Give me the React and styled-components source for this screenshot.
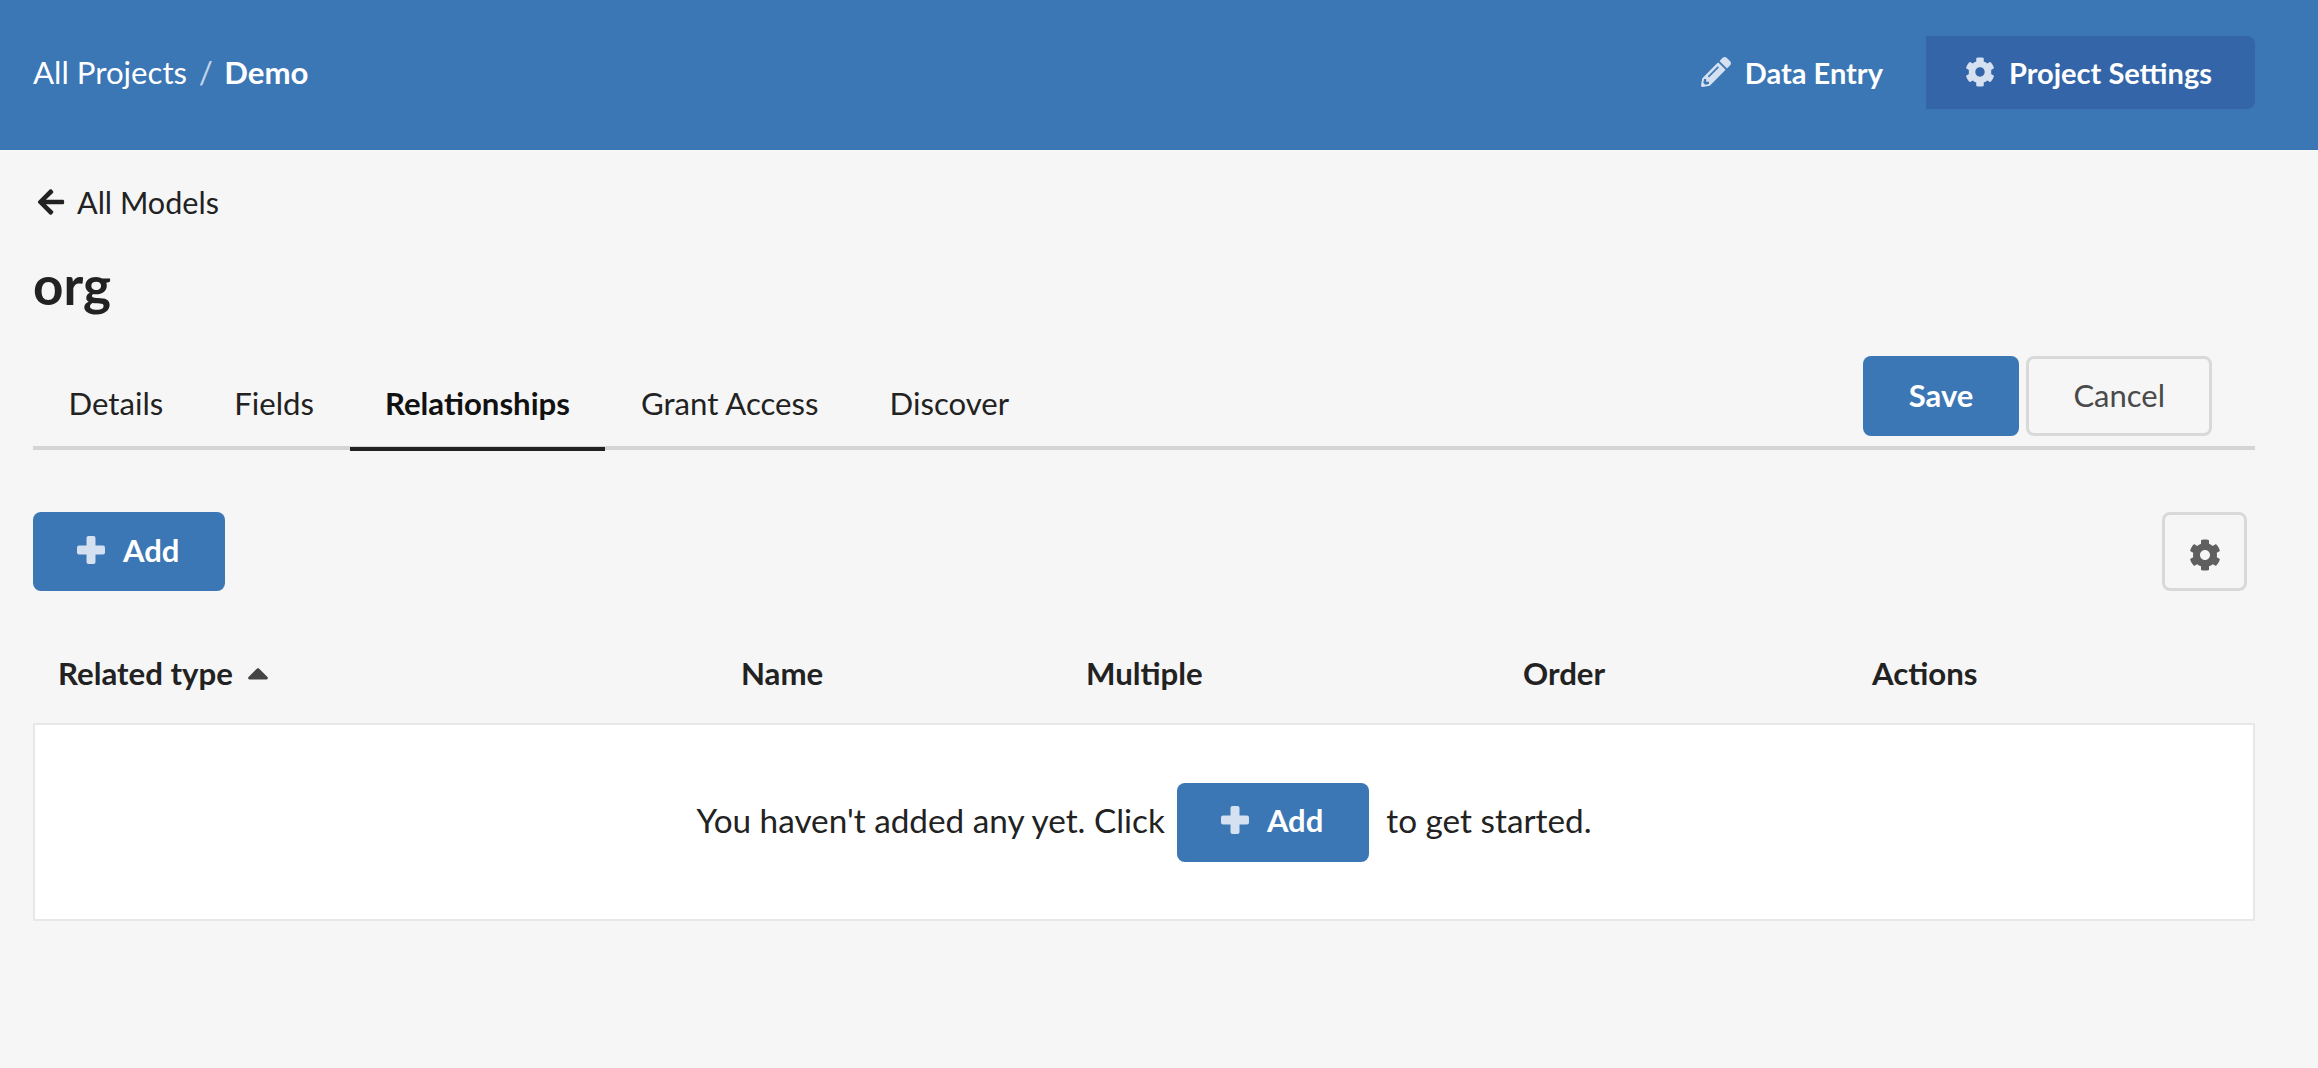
import React from "react";
import styled, { createGlobalStyle } from "styled-components";
import { FaPencilAlt, FaCog, FaArrowLeft, FaCaretUp } from "react-icons/fa";

const Global = createGlobalStyle`
  html, body { margin: 0; padding: 0; background: #f6f6f6; }
  body { font-family: Lato, "Liberation Sans", sans-serif; color: #222; font-size: 31px; }
  button { font-family: inherit; }
`;

const Page = styled.div`
  min-height: 1068px;
  background: #f6f6f6;
`;
const Header = styled.header`
  height: 150px;
  box-sizing: border-box;
  background: #3b76b5;
  padding: 0 63px 6px 33px;
  display: flex;
  align-items: center;
  justify-content: space-between;
`;
const Crumbs = styled.nav`
  display: flex;
  align-items: center;
  color: #fff;
  font-size: 31.2px;
`;
const Slash = styled.span`
  color: #c3d4e8;
  margin: 0 11.5px;
`;
const Strong = styled.span`
  font-weight: 700;
`;
const HeaderNav = styled.div`
  display: flex;
  align-items: center;
`;
const NavItem = styled.div`
  height: 73px;
  display: flex;
  align-items: center;
  gap: 14px;
  padding: 0 43px 0 39px;
  color: #fff;
  font-size: 29px;
  font-weight: 700;
  border-radius: 0 8px 8px 0;
  background: ${(p) => (p.$active ? "#3365a8" : "transparent")};
  svg { color: #d5e0f0; width: 30px; height: 30px; }
`;
const Main = styled.main`
  padding: 0 63px 0 33px;
`;
const Back = styled.div`
  display: flex;
  align-items: center;
  gap: 11px;
  height: 50px;
  margin-top: 27px;
  font-size: 30.6px;
  svg { width: 30px; height: 30px; margin-left: 3px; }
`;
const Title = styled.h1`
  margin: 23px 0 0;
  font-size: 53px;
  line-height: 70px;
  font-weight: 700;
`;
const TabBar = styled.div`
  display: flex;
  justify-content: space-between;
  align-items: flex-end;
  height: 94px;
  box-sizing: border-box;
  margin-top: 36px;
  border-bottom: 4px solid #d4d4d4;
`;
const Tabs = styled.div`
  display: flex;
`;
const Tab = styled.div`
  padding: 0 35.5px;
  height: 68px;
  line-height: 41px;
  box-sizing: border-box;
  font-size: 31.15px;
  font-weight: ${(p) => (p.$active ? 700 : 400)};
  color: ${(p) => (p.$active ? "#111" : "#222")};
  border-bottom: ${(p) => (p.$active ? "4px solid #222" : "0")};
  margin-bottom: -5px;
`;
const TabActions = styled.div`
  display: flex;
  gap: 7px;
  padding-right: 43px;
  margin-bottom: 10px;
`;
const PrimaryButton = styled.button`
  height: 80px;
  box-sizing: border-box;
  padding: 0 46px 2px;
  border: 0;
  border-radius: 8px;
  background: #3b76b5;
  color: #fff;
  font-size: 31px;
  font-weight: 700;
  display: inline-flex;
  align-items: center;
  gap: 18px;
  svg { color: #d5e0f0; width: 28px; height: 28px; }
`;
const AddButton = styled(PrimaryButton)`
  height: 79px;
  padding: 0 46px 4px 44px;
`;
const GhostButton = styled.button`
  height: 80px;
  box-sizing: border-box;
  padding: 0 44px 2px;
  border: 3px solid #d9d9d9;
  border-radius: 8px;
  background: #f6f6f6;
  color: #4a4a4a;
  font-size: 31px;
  display: inline-flex;
  align-items: center;
  justify-content: center;
`;
const SquareButton = styled(GhostButton)`
  width: 85px;
  height: 79px;
  padding: 6px 0 0;
  svg { color: #5f5f5f; width: 32px; height: 32px; }
`;
const Toolbar = styled.div`
  display: flex;
  justify-content: space-between;
  margin-top: 62px;
  padding-right: 8px;
`;
const TableHead = styled.div`
  display: grid;
  grid-template-columns: 683px 345px 437px 349px 1fr;
  height: 132px;
  box-sizing: border-box;
  align-items: center;
  padding: 31px 0 0 25px;
  font-size: 31.2px;
  font-weight: 700;
`;
const HeadCell = styled.div`
  display: flex;
  align-items: center;
  gap: 8px;
  svg { width: 34px; height: 34px; color: #444; }
`;
const Empty = styled.div`
  height: 198px;
  box-sizing: border-box;
  background: #fff;
  border: 2px solid #e8e8e8;
  display: flex;
  align-items: center;
  justify-content: center;
  font-size: 33.3px;
`;
const EmptyText = styled.span`
  margin-top: -4px;
`;
const EmptyAction = styled.span`
  margin: 0 17px 0 12px;
  display: inline-flex;
`;

const PlusIcon = () => (
  <svg viewBox="0 0 28 28" fill="currentColor" aria-hidden="true">
    <rect x="9.5" y="0" width="9" height="28" rx="2" />
    <rect x="0" y="9.5" width="28" height="9" rx="2" />
  </svg>
);

export default function App() {
  return (
    <Page>
      <Global />
      <Header>
        <Crumbs>
          <span>All Projects</span>
          <Slash>/</Slash>
          <Strong>Demo</Strong>
        </Crumbs>
        <HeaderNav>
          <NavItem><FaPencilAlt />Data Entry</NavItem>
          <NavItem $active><FaCog />Project Settings</NavItem>
        </HeaderNav>
      </Header>
      <Main>
        <Back><FaArrowLeft />All Models</Back>
        <Title>org</Title>
        <TabBar>
          <Tabs>
            <Tab>Details</Tab>
            <Tab>Fields</Tab>
            <Tab $active>Relationships</Tab>
            <Tab>Grant Access</Tab>
            <Tab>Discover</Tab>
          </Tabs>
          <TabActions>
            <PrimaryButton>Save</PrimaryButton>
            <GhostButton>Cancel</GhostButton>
          </TabActions>
        </TabBar>
        <Toolbar>
          <AddButton><PlusIcon />Add</AddButton>
          <SquareButton><FaCog /></SquareButton>
        </Toolbar>
        <TableHead>
          <HeadCell>Related type <FaCaretUp /></HeadCell>
          <HeadCell>Name</HeadCell>
          <HeadCell>Multiple</HeadCell>
          <HeadCell>Order</HeadCell>
          <HeadCell>Actions</HeadCell>
        </TableHead>
        <Empty>
          <EmptyText>You haven't added any yet. Click</EmptyText>
          <EmptyAction><AddButton><PlusIcon />Add</AddButton></EmptyAction>
          <EmptyText>to get started.</EmptyText>
        </Empty>
      </Main>
    </Page>
  );
}
